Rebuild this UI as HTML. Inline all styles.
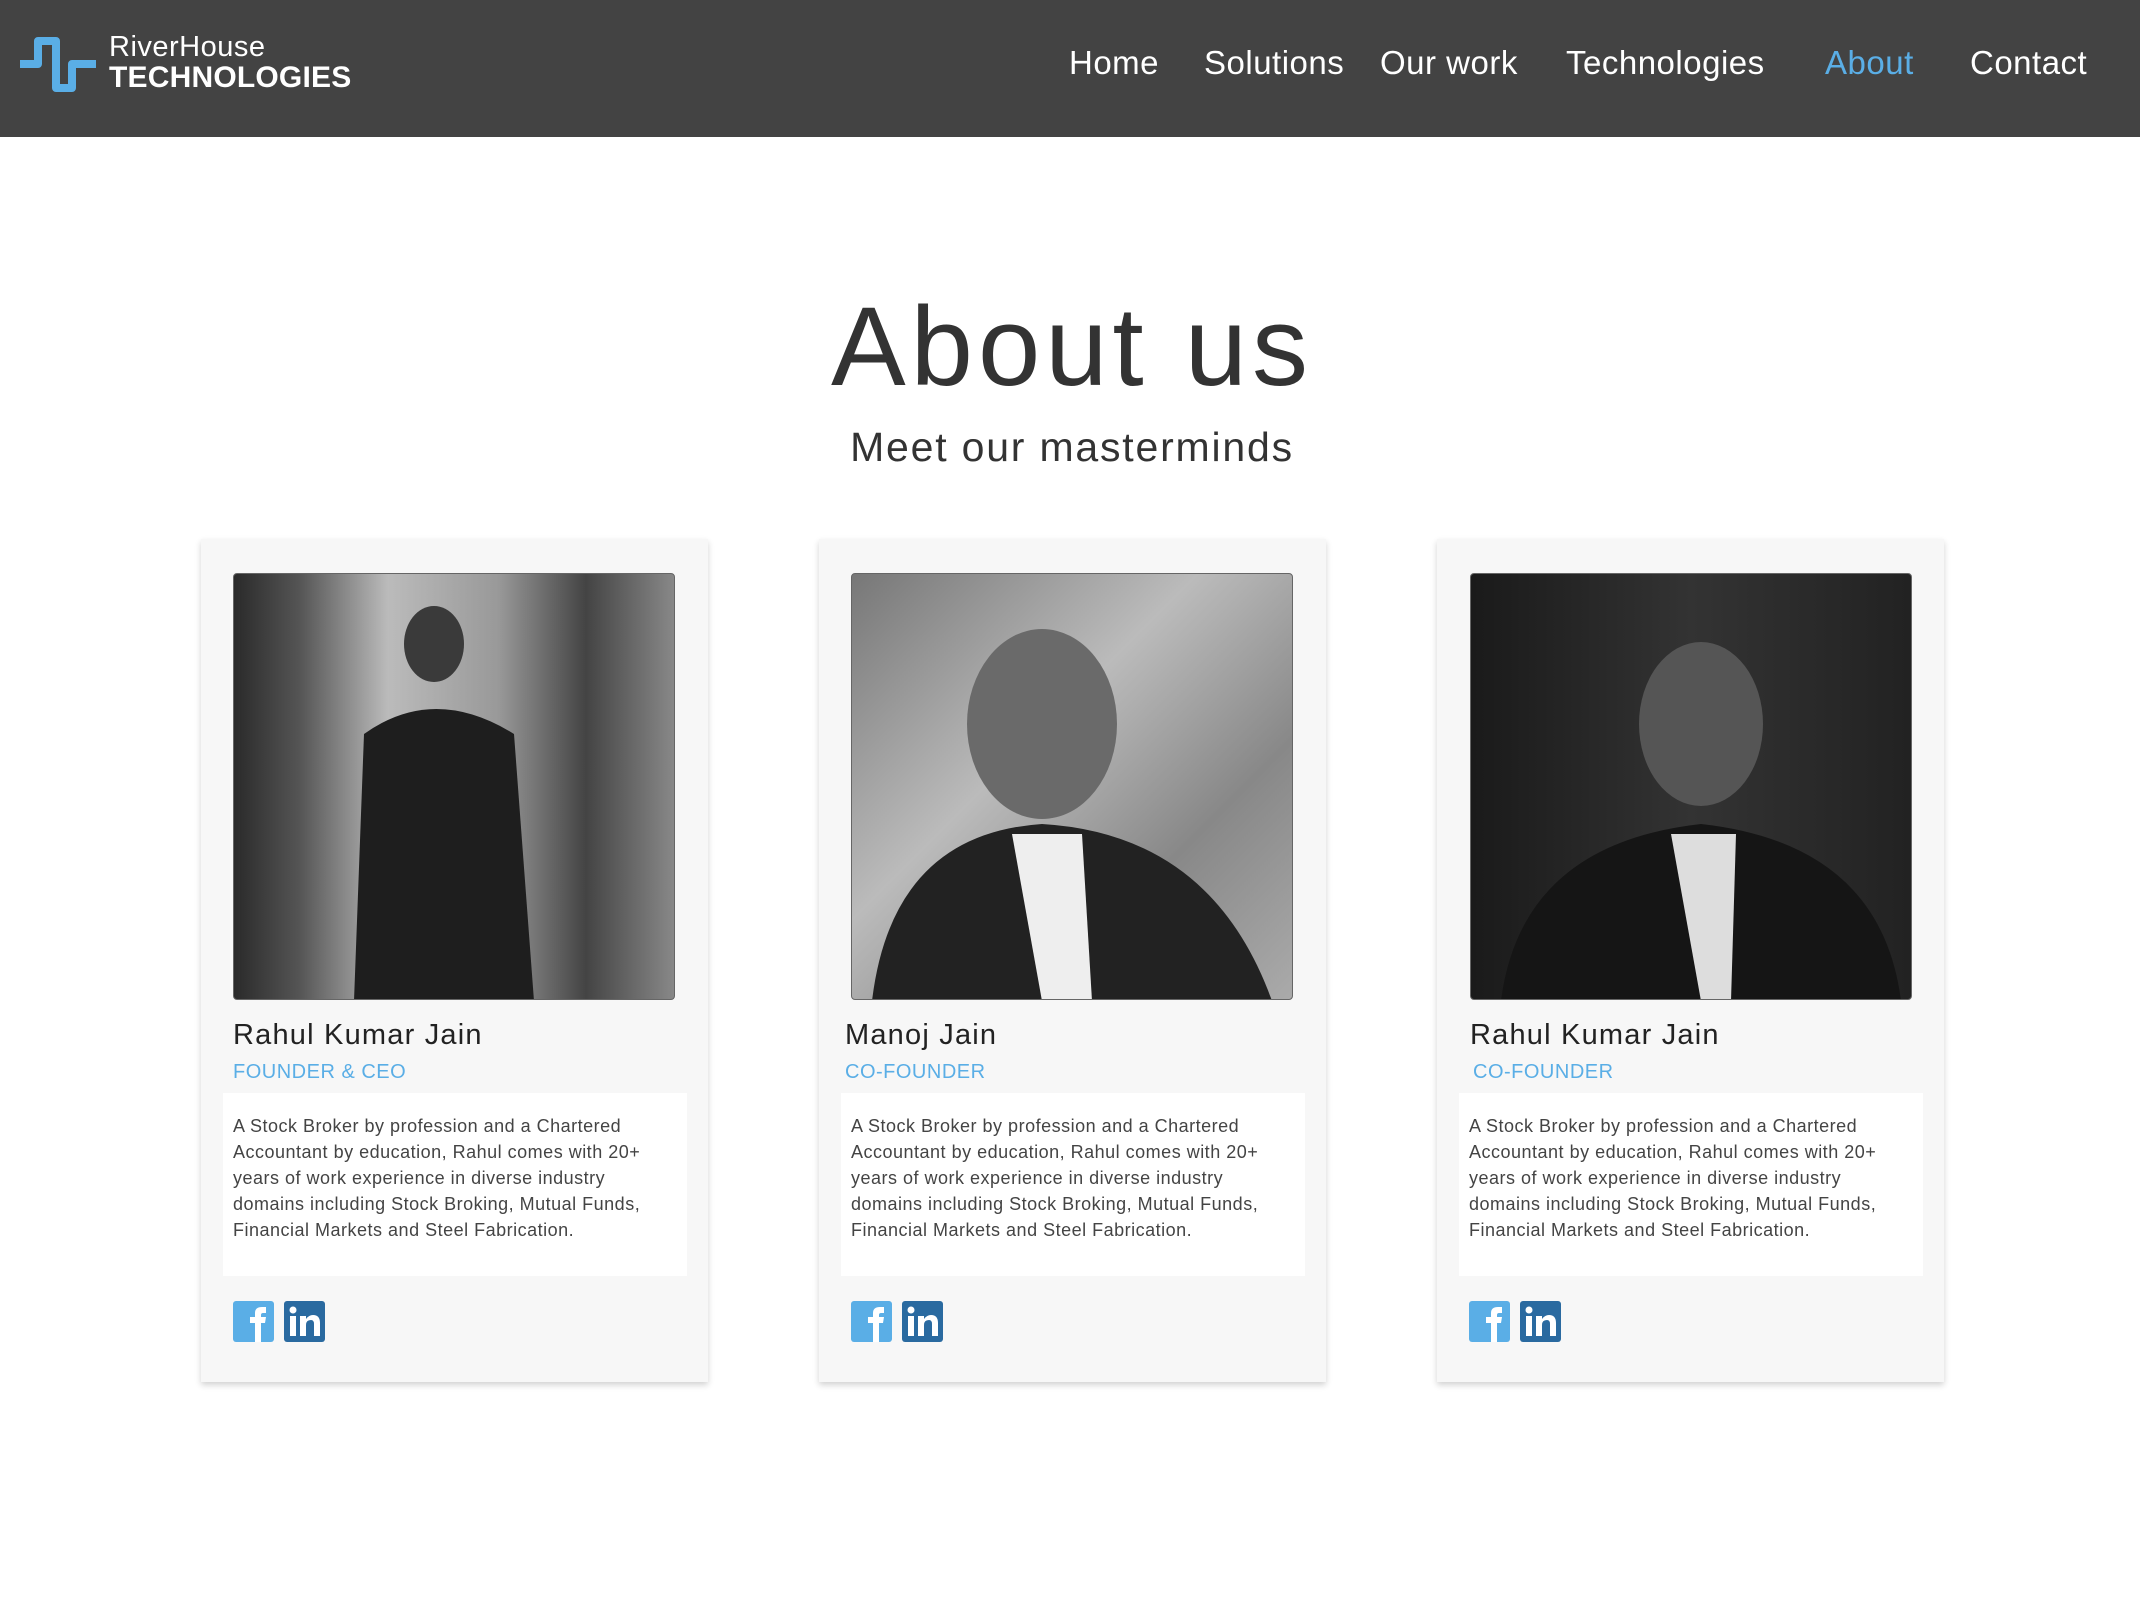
<!DOCTYPE html>
<html><head><meta charset="utf-8">
<style>
*{margin:0;padding:0;box-sizing:border-box}
body{width:2140px;height:1598px;background:#fff;font-family:"Liberation Sans",sans-serif;position:relative;overflow:hidden}
.hdr{position:absolute;left:0;top:0;width:2140px;height:137px;background:#434343}
.logo1{position:absolute;left:109px;top:31px;color:#fff;font-size:29px;letter-spacing:0.5px}
.logo2{position:absolute;left:109px;top:61px;color:#fff;font-size:30px;font-weight:bold;letter-spacing:0.2px}
.nav{position:absolute;top:44px;color:#fff;font-size:33px;letter-spacing:0.5px}
h1{position:absolute;left:0;width:2144px;text-align:center;top:282px;font-size:112px;font-weight:normal;color:#333;letter-spacing:5px}
.sub{position:absolute;left:0;width:2144px;text-align:center;top:424px;font-size:41px;color:#333;letter-spacing:1.8px}
.card{position:absolute;top:539px;width:507px;height:843px;background:#f7f7f7;box-shadow:0 3px 6px rgba(0,0,0,.18)}
.ph{position:absolute;left:32px;top:34px;width:442px;height:427px;border:1px solid #666;border-radius:4px;overflow:hidden}
.nm{position:absolute;left:32px;top:480px;font-size:29px;color:#222;letter-spacing:1.2px}
.rl{position:absolute;left:32px;top:522px;font-size:20px;color:#5aaee6;letter-spacing:0.5px}
.bx{position:absolute;left:22px;top:554px;width:464px;height:183px;background:#fff;padding:20px 4px 0 10px;font-size:18px;line-height:26px;color:#444;letter-spacing:0.5px;white-space:nowrap}
.ic{position:absolute;top:762px;width:41px;height:41px;border-radius:3px}
</style></head><body>
<div class="hdr">
<svg style="position:absolute;left:16px;top:36px" width="86" height="60" viewBox="0 0 86 60"><path d="M4 28 H22 V5 H40 V52 H56 V28 H80" fill="none" stroke="#5aaee6" stroke-width="8" stroke-linejoin="round"/></svg>
<div class="logo1">RiverHouse</div>
<div class="logo2">TECHNOLOGIES</div>
<div class="nav" style="left:1069px">Home</div>
<div class="nav" style="left:1204px">Solutions</div>
<div class="nav" style="left:1380px">Our work</div>
<div class="nav" style="left:1566px">Technologies</div>
<div class="nav" style="left:1825px;color:#5aaee6">About</div>
<div class="nav" style="left:1970px">Contact</div>
</div>
<h1>About us</h1>
<div class="sub">Meet our masterminds</div>

<div class="card" style="left:201px">
<div class="ph" style="background:linear-gradient(90deg,#2a2a2a 0,#555 15%,#bbb 35%,#999 60%,#444 80%,#888 100%)">
<svg width="442" height="427"><ellipse cx="200" cy="70" rx="30" ry="38" fill="#3a3a3a"/><path d="M120 427 L130 160 Q200 110 280 160 L300 427Z" fill="#1e1e1e"/></svg></div>
<div class="nm">Rahul Kumar Jain</div><div class="rl">FOUNDER &amp; CEO</div>
<div class="bx">A Stock Broker by profession and a Chartered<br>Accountant by education, Rahul comes with 20+<br>years of work experience in diverse industry<br>domains including Stock Broking, Mutual Funds,<br>Financial Markets and Steel Fabrication.</div>
<div class="ic" style="left:32px;background:#5aaee6"><svg width="41" height="41"><path d="M22 41 V22 H17 V16 H22 V12 Q22 6 29 6 H33 V12 H30 Q28 12 28 14 V16 H33 L32 22 H28 V41Z" fill="#fff"/></svg></div>
<div class="ic" style="left:83px;background:#2a6aa0"><svg width="41" height="41"><rect x="6" y="15" width="6" height="20" fill="#fff"/><circle cx="9" cy="9" r="3.5" fill="#fff"/><path d="M16 15 H22 V18 Q25 14 29 14 Q36 14 36 22 V35 H30 V23 Q30 19 27 19 Q22 19 22 24 V35 H16Z" fill="#fff"/></svg></div>
</div>

<div class="card" style="left:819px">
<div class="ph" style="left:32px;background:linear-gradient(135deg,#777,#bbb 40%,#888 70%,#aaa)">
<svg width="442" height="427"><ellipse cx="190" cy="150" rx="75" ry="95" fill="#6a6a6a"/><path d="M20 427 Q40 260 190 250 Q360 260 420 427Z" fill="#222"/><path d="M160 260 L190 427 L240 427 L230 260Z" fill="#eee"/></svg></div>
<div class="nm" style="left:26px">Manoj Jain</div><div class="rl" style="left:26px">CO-FOUNDER</div>
<div class="bx">A Stock Broker by profession and a Chartered<br>Accountant by education, Rahul comes with 20+<br>years of work experience in diverse industry<br>domains including Stock Broking, Mutual Funds,<br>Financial Markets and Steel Fabrication.</div>
<div class="ic" style="left:32px;background:#5aaee6"><svg width="41" height="41"><path d="M22 41 V22 H17 V16 H22 V12 Q22 6 29 6 H33 V12 H30 Q28 12 28 14 V16 H33 L32 22 H28 V41Z" fill="#fff"/></svg></div>
<div class="ic" style="left:83px;background:#2a6aa0"><svg width="41" height="41"><rect x="6" y="15" width="6" height="20" fill="#fff"/><circle cx="9" cy="9" r="3.5" fill="#fff"/><path d="M16 15 H22 V18 Q25 14 29 14 Q36 14 36 22 V35 H30 V23 Q30 19 27 19 Q22 19 22 24 V35 H16Z" fill="#fff"/></svg></div>
</div>

<div class="card" style="left:1437px">
<div class="ph" style="left:33px;background:linear-gradient(90deg,#1a1a1a,#333 50%,#222)">
<svg width="442" height="427"><ellipse cx="230" cy="150" rx="62" ry="82" fill="#555"/><path d="M30 427 Q50 270 230 250 Q410 270 430 427Z" fill="#151515"/><path d="M200 260 L230 427 L260 427 L265 260Z" fill="#ddd"/></svg></div>
<div class="nm" style="left:33px">Rahul Kumar Jain</div><div class="rl" style="left:36px">CO-FOUNDER</div>
<div class="bx">A Stock Broker by profession and a Chartered<br>Accountant by education, Rahul comes with 20+<br>years of work experience in diverse industry<br>domains including Stock Broking, Mutual Funds,<br>Financial Markets and Steel Fabrication.</div>
<div class="ic" style="left:32px;background:#5aaee6"><svg width="41" height="41"><path d="M22 41 V22 H17 V16 H22 V12 Q22 6 29 6 H33 V12 H30 Q28 12 28 14 V16 H33 L32 22 H28 V41Z" fill="#fff"/></svg></div>
<div class="ic" style="left:83px;background:#2a6aa0"><svg width="41" height="41"><rect x="6" y="15" width="6" height="20" fill="#fff"/><circle cx="9" cy="9" r="3.5" fill="#fff"/><path d="M16 15 H22 V18 Q25 14 29 14 Q36 14 36 22 V35 H30 V23 Q30 19 27 19 Q22 19 22 24 V35 H16Z" fill="#fff"/></svg></div>
</div>
</body></html>
